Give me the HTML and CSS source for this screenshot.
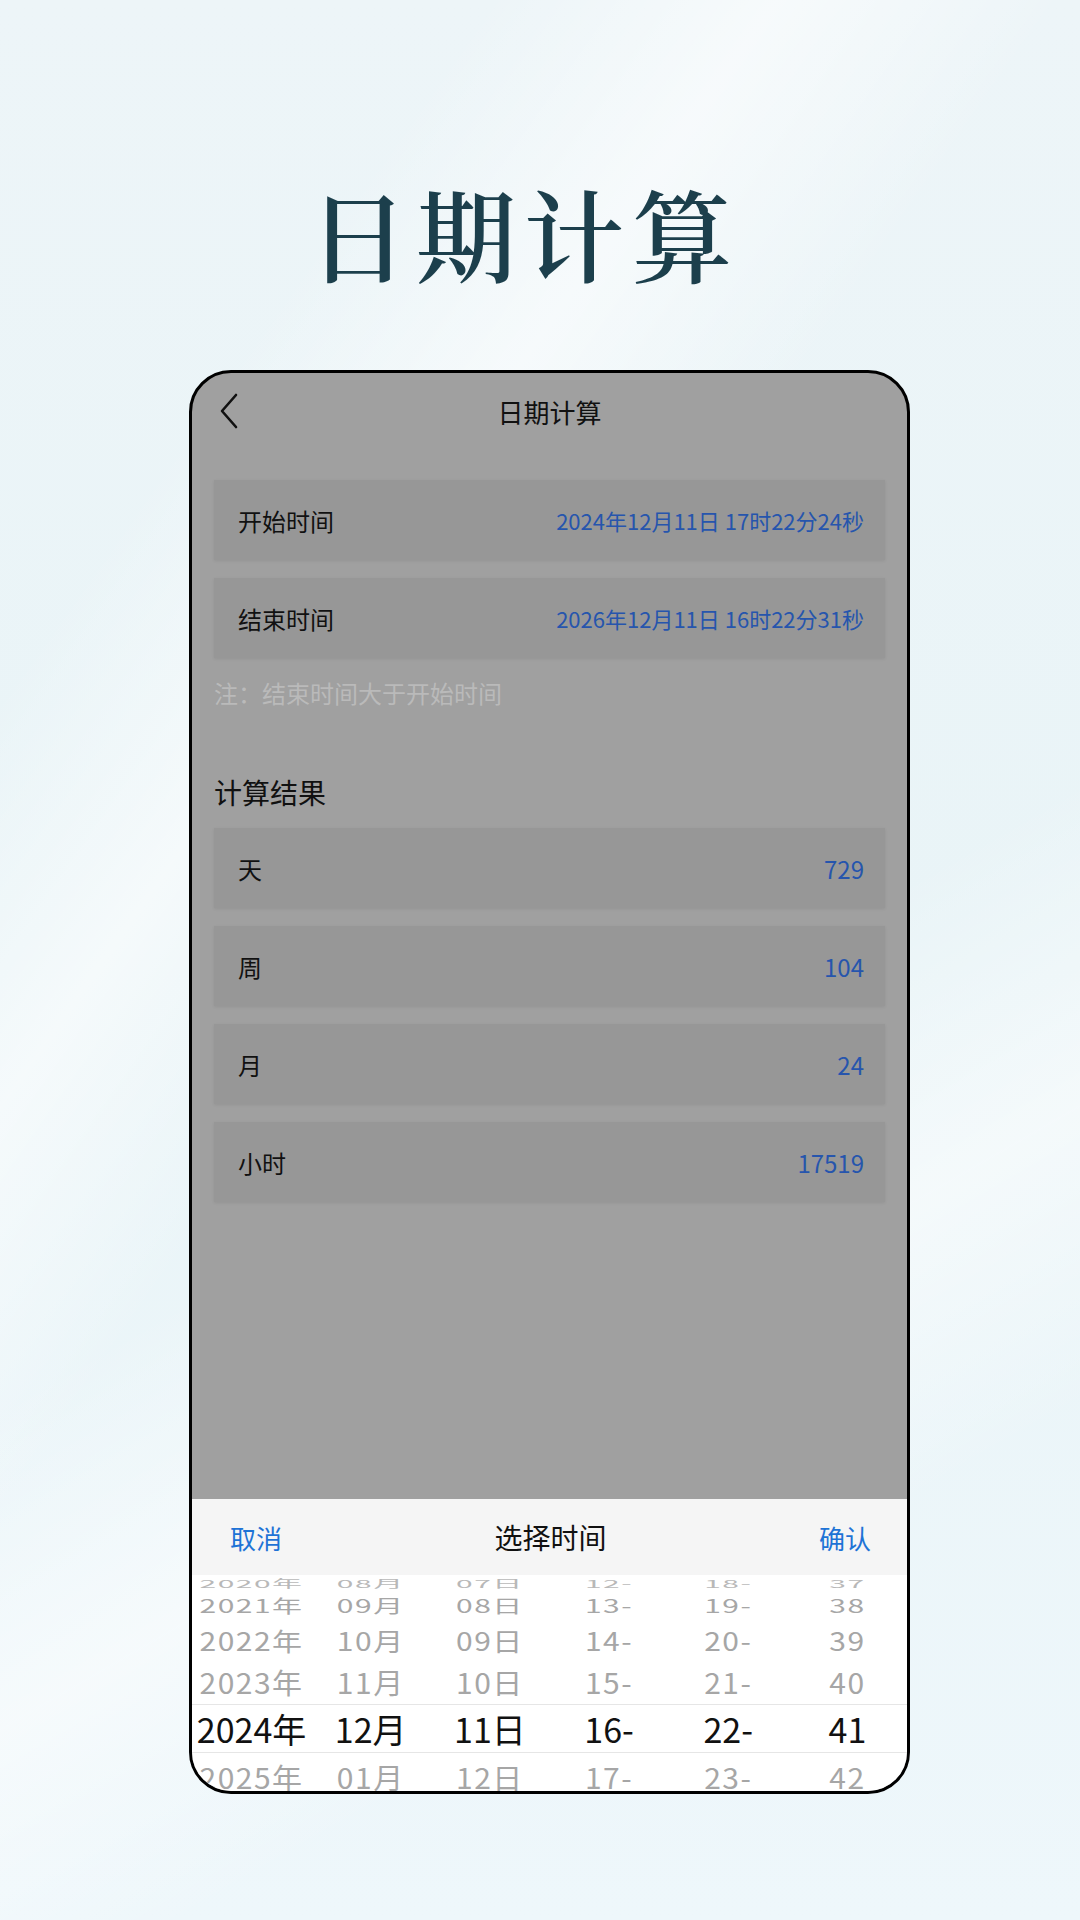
FILE: index.html
```html
<!DOCTYPE html>
<html lang="zh-CN">
<head>
    <meta charset="UTF-8">
    <meta name="viewport" content="width=device-width, initial-scale=1.0">
    <title>日期计算</title>
    <link rel="stylesheet" href="styles.css">
</head>
<body>
    <div id="page">
        <h1 class="hero">日期计算</h1>

        <div id="phone">
            <div class="nav">
                <svg class="back" width="20" height="36" viewBox="0 0 20 36">
                    <path d="M17 2 L3 18 L17 34" fill="none" stroke="#111" stroke-width="2.6" stroke-linecap="round" stroke-linejoin="round"/>
                </svg>
                <div class="nav-title">日期计算</div>
                <span></span>
            </div>

            <div class="content">
                <div class="row">
                    <span class="label">开始时间</span>
                    <span class="value">2024年12月11日 17时22分24秒</span>
                </div>
                <div class="row">
                    <span class="label">结束时间</span>
                    <span class="value">2026年12月11日 16时22分31秒</span>
                </div>
                <p class="note">注：结束时间大于开始时间</p>

                <h4 class="section">计算结果</h4>
                <div class="row">
                    <span class="label">天</span>
                    <span class="value num">729</span>
                </div>
                <div class="row">
                    <span class="label">周</span>
                    <span class="value num">104</span>
                </div>
                <div class="row">
                    <span class="label">月</span>
                    <span class="value num">24</span>
                </div>
                <div class="row">
                    <span class="label">小时</span>
                    <span class="value num">17519</span>
                </div>
            </div>

            <!-- time picker sheet, lies over the dimmed page -->
            <div class="picker">
                <div class="picker-head">
                    <span class="picker-btn">取消</span>
                    <span class="picker-title">选择时间</span>
                    <span class="picker-btn">确认</span>
                </div>
                <div class="wheels">
                    <div class="wheel">
                        <div class="item p0"><span>2020年</span></div>
                        <div class="item p1"><span>2021年</span></div>
                        <div class="item p2"><span>2022年</span></div>
                        <div class="item p3"><span>2023年</span></div>
                        <div class="item sel"><span>2024年</span></div>
                        <div class="item p5"><span>2025年</span></div>
                    </div>
                    <div class="wheel">
                        <div class="item p0"><span>08月</span></div>
                        <div class="item p1"><span>09月</span></div>
                        <div class="item p2"><span>10月</span></div>
                        <div class="item p3"><span>11月</span></div>
                        <div class="item sel"><span>12月</span></div>
                        <div class="item p5"><span>01月</span></div>
                    </div>
                    <div class="wheel">
                        <div class="item p0"><span>07日</span></div>
                        <div class="item p1"><span>08日</span></div>
                        <div class="item p2"><span>09日</span></div>
                        <div class="item p3"><span>10日</span></div>
                        <div class="item sel"><span>11日</span></div>
                        <div class="item p5"><span>12日</span></div>
                    </div>
                    <div class="wheel">
                        <div class="item p0"><span>12-</span></div>
                        <div class="item p1"><span>13-</span></div>
                        <div class="item p2"><span>14-</span></div>
                        <div class="item p3"><span>15-</span></div>
                        <div class="item sel"><span>16-</span></div>
                        <div class="item p5"><span>17-</span></div>
                    </div>
                    <div class="wheel">
                        <div class="item p0"><span>18-</span></div>
                        <div class="item p1"><span>19-</span></div>
                        <div class="item p2"><span>20-</span></div>
                        <div class="item p3"><span>21-</span></div>
                        <div class="item sel"><span>22-</span></div>
                        <div class="item p5"><span>23-</span></div>
                    </div>
                    <div class="wheel">
                        <div class="item p0"><span>37</span></div>
                        <div class="item p1"><span>38</span></div>
                        <div class="item p2"><span>39</span></div>
                        <div class="item p3"><span>40</span></div>
                        <div class="item sel"><span>41</span></div>
                        <div class="item p5"><span>42</span></div>
                    </div>
                </div>
            </div>
        </div>
    </div>
</body>
</html>
```

FILE: styles.css
```css
body {
    margin: 0;
    padding: 0;
    font-family: "Noto Sans CJK SC", "Noto Sans", sans-serif;
    color: #111;
    overflow: hidden;
}

#page {
    width: 1080px;
    height: 1920px;
    box-sizing: border-box;
    padding-top: 182px;
    background:
        linear-gradient(125deg, rgba(255,255,255,0) 20%, rgba(255,255,255,0.55) 32%, rgba(255,255,255,0) 44%),
        linear-gradient(150deg, rgba(255,255,255,0) 55%, rgba(255,255,255,0.5) 68%, rgba(255,255,255,0) 80%),
        linear-gradient(180deg, #edf5f8 0%, #e9f4f7 50%, #eef7fb 100%);
}

.hero {
    margin: 0;
    padding-right: 32px;
    text-align: center;
    font-family: "Noto Serif CJK SC", "Noto Sans CJK SC", serif;
    font-size: 100px;
    font-weight: 600;
    line-height: 100px;
    letter-spacing: 8px;
    color: #1c3f4c;
}

#phone {
    position: relative;
    width: 721px;
    height: 1424px;
    box-sizing: border-box;
    margin: 88px 0 0 189px;
    border: 3px solid #000;
    border-radius: 42px;
    overflow: hidden;
    background: #a0a0a0;
}

.nav {
    display: grid;
    grid-template-columns: 80px 1fr 80px;
    align-items: center;
    height: 76px;
}

.back {
    margin-left: 27px;
}

.nav-title {
    text-align: center;
    font-size: 26px;
}

.content {
    padding: 31px 22px 0;
}

.row {
    display: flex;
    justify-content: space-between;
    align-items: center;
    height: 80px;
    padding: 0 21px 0 24px;
    margin-bottom: 18px;
    background: #979797;
    box-shadow: 0 1px 3px rgba(0, 0, 0, 0.08);
}

.label {
    font-size: 24px;
    color: #111;
}

.value {
    font-size: 22px;
    color: #2655ad;
}

.value.num {
    font-size: 24px;
}

.note {
    margin: 0;
    height: 34px;
    line-height: 34px;
    font-size: 24px;
    color: #bababa;
}

.section {
    margin: 62px 0 16px;
    height: 40px;
    line-height: 40px;
    font-size: 28px;
    font-weight: normal;
}

.picker {
    position: absolute;
    left: 0;
    right: 0;
    bottom: 0;
    height: 292px;
}

.picker-head {
    display: flex;
    justify-content: space-between;
    align-items: center;
    height: 76px;
    padding: 0 36px 0 38px;
    background: #f5f5f5;
}

.picker-btn {
    font-size: 26px;
    color: #1e73d6;
}

.picker-title {
    font-size: 28px;
    color: #111;
}

.wheels {
    display: grid;
    grid-template-columns: repeat(6, 1fr);
    height: 216px;
    box-sizing: border-box;
    padding-top: 1px;
    overflow: hidden;
    background: #fff;
}

.wheel {
    display: flex;
    flex-direction: column;
}

.item {
    display: flex;
    align-items: center;
    justify-content: center;
    flex: none;
    font-size: 30px;
    letter-spacing: 1.5px;
    color: #a6a6a6;
    white-space: nowrap;
}

.item span {
    display: inline-block;
    line-height: 1;
}

.p0 { height: 13px; }
.p0 span { transform: scaleY(0.36); color: #b8b8b8; }
.p1 { height: 31px; }
.p1 span { transform: scaleY(0.6); }
.p2 { height: 39px; }
.p2 span { transform: scaleY(0.84); }
.p3 { height: 45px; }
.p3 span { transform: scaleY(0.94); }
.p5 { height: 47px; }
.p5 span { transform: scaleY(0.94); }

.item.sel {
    height: 49px;
    box-sizing: border-box;
    border-top: 1px solid #e6e6e6;
    border-bottom: 1px solid #e6e6e6;
    font-size: 34px;
    letter-spacing: 0;
    color: #111;
}
```
